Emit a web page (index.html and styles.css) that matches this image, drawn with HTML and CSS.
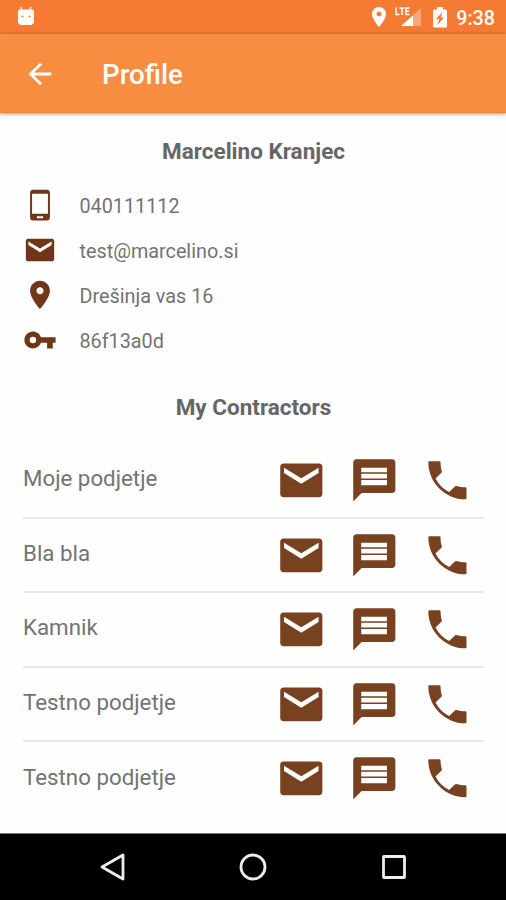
FILE: index.html
```html
<!DOCTYPE html>
<html lang="sl">
<head>
    <meta charset="UTF-8">
    <meta name="viewport" content="width=device-width, initial-scale=1.0">
    <title>Profile</title>
    <link rel="stylesheet" href="styles.css">
</head>
<body>
    <svg class="sprite" width="0" height="0">
        <symbol id="mail" viewBox="0 0 24 24"><path d="M20.500 4h-17C2.700 4 2 4.700 2 5.500v13c0 .8.7 1.500 1.500 1.500h17c.8 0 1.500-.7 1.500-1.500v-13c0-.8-.7-1.500-1.500-1.500zM20.200 8.500L12 13.600 3.800 8.500V6l8.200 5 8.200-5v2.500z"/></symbol>
        <symbol id="chat" viewBox="0 0 24 24"><path d="M20.500 2h-17C2.700 2 2 2.700 2 3.500V22l4-4h14.500c.8 0 1.500-.7 1.500-1.500v-13c0-.8-.7-1.500-1.500-1.500zM18 14.300H5.800v-2.400H18v2.400zm0-3.100H5.800V8.900H18v2.300zm0-3H5.800V6H18v2.200z"/></symbol>
        <symbol id="call" viewBox="0 0 24 24"><path d="M6.400 11.100c1.500 2.800 3.700 5 6.500 6.500l2.700-2.700q.3-.3.700-.2c1.300.4 2.800.6 4.300.6q.5 0 .5.500v4.700q0 .5-.5.500C11 21 3 13 3 3.500Q3 3 3.500 3h4.800q.5 0 .5.500c0 1.500.2 3 .6 4.200q.1.400-.2.700z"/></symbol>
        <symbol id="phone" viewBox="0 0 24 24"><path d="M17 1.300H7c-1.100 0-2 .9-2 2V21c0 1.100.9 2 2 2h10c1.100 0 2-.9 2-2V3.300c0-1.100-.9-2-2-2zM14.200 21.300H9.800V20h4.400v1.300zm3.400-3.100H6.400V4h11.200v14.200z"/></symbol>
        <symbol id="place" viewBox="0 0 24 24"><path d="M12 2C8.130 2 5 5.130 5 9c0 5.250 7 13 7 13s7-7.750 7-13c0-3.870-3.130-7-7-7zm0 9.500c-1.380 0-2.500-1.120-2.500-2.500s1.120-2.500 2.500-2.500 2.500 1.120 2.500 2.500-1.120 2.500-2.500 2.500z"/></symbol>
        <symbol id="key" viewBox="0 0 24 24"><path d="M12.650 10C11.830 7.670 9.610 6 7 6c-3.310 0-6 2.690-6 6s2.690 6 6 6c2.610 0 4.830-1.670 5.650-4H17v4h4v-4h2v-4H12.650zM7 14.300a2.300 2.300 0 1 1 0-4.600 2.300 2.300 0 0 1 0 4.600z"/></symbol>
    </svg>

    <div class="statusbar">
        <svg class="debug" width="18" height="20" viewBox="0 0 18 20"><path d="M3.500 1l1.500 3.500M14 1l-1.500 3.500" stroke="#fff" stroke-width="1.300"/><path d="M3 3.500h12q2 0 2 2V15q0 4-4 4H5q-4 0-4-4V5.500q0-2 2-2z"/><path d="M4.500 10.500h2M11.500 10.500h2" stroke="#f57a33" stroke-width="1.600"/></svg>
        <svg class="location" width="24" height="24"><use href="#place"/></svg>
        <svg class="signal" width="27" height="22" viewBox="0 0 27 22"><path d="M26 2v18H6z" opacity=".35"/><path d="M18 9.500V20H6z"/><path d="M1 1.500v7h3.500M4.500 2h5M7 2v7M14.500 2h-3.500v6.500h3.500M11 5.200h3" fill="none" stroke="#fff" stroke-width="1.500"/></svg>
        <svg class="battery" width="14" height="21" viewBox="0 0 14 21"><path d="M4 0h6v2.500h2.500q1.500 0 1.500 1.500v15q0 1.500-1.500 1.500h-11Q0 20.500 0 19V4q0-1.500 1.500-1.500H4z"/><path d="M9.500 5L3 12h3.200L4.500 18 11 10.500H7.800z" fill="#f57a33"/></svg>
        <span class="clock">9:38</span>
    </div>

    <header class="toolbar">
        <svg class="back" width="34" height="34" viewBox="0 0 24 24"><path d="M20 11H7.830l5.590-5.590L12 4l-8 8 8 8 1.410-1.410L7.830 13H20v-2z"/></svg>
        <h1>Profile</h1>
    </header>

    <main>
        <h2>Marcelino Kranjec</h2>
        <ul class="details">
            <li><svg><use href="#phone"/></svg><span>040111112</span></li>
            <li><svg><use href="#mail"/></svg><span>test@marcelino.si</span></li>
            <li><svg><use href="#place"/></svg><span>Drešinja vas 16</span></li>
            <li><svg><use href="#key"/></svg><span>86f13a0d</span></li>
        </ul>

        <h2>My Contractors</h2>
        <ul class="contractors">
            <li><span>Moje podjetje</span><svg><use href="#mail"/></svg><svg><use href="#chat"/></svg><svg><use href="#call"/></svg></li>
            <li><span>Bla bla</span><svg><use href="#mail"/></svg><svg><use href="#chat"/></svg><svg><use href="#call"/></svg></li>
            <li><span>Kamnik</span><svg><use href="#mail"/></svg><svg><use href="#chat"/></svg><svg><use href="#call"/></svg></li>
            <li><span>Testno podjetje</span><svg><use href="#mail"/></svg><svg><use href="#chat"/></svg><svg><use href="#call"/></svg></li>
            <li><span>Testno podjetje</span><svg><use href="#mail"/></svg><svg><use href="#chat"/></svg><svg><use href="#call"/></svg></li>
        </ul>
    </main>

    <nav class="navbar">
        <svg width="30" height="30" viewBox="0 0 30 30"><path d="M25 3v24L4 15z"/></svg>
        <svg width="30" height="30" viewBox="0 0 30 30"><circle cx="15" cy="15" r="12"/></svg>
        <svg width="30" height="30" viewBox="0 0 30 30"><rect x="4.500" y="4.500" width="21" height="21" rx=".5"/></svg>
    </nav>
</body>
</html>
```
FILE: styles.css
```css
* {
    box-sizing: border-box;
}
body {
    margin: 0;
    height: 900px;
    display: flex;
    flex-direction: column;
    overflow: hidden;
    font-family: Roboto, sans-serif;
    background-color: #fefefe;
    color: #737373;
}
h1, h2, ul {
    margin: 0;
    padding: 0;
}
.sprite {
    display: none;
}
.statusbar {
    height: 34px;
    display: flex;
    align-items: center;
    padding: 0 11px 0 17px;
    background-color: #f57a33;
    color: white;
    fill: white;
}
.debug {
    margin-bottom: 2px;
}
.location {
    margin-left: auto;
}
.signal {
    margin-left: 4px;
}
.battery {
    margin-left: 11px;
}
.clock {
    margin-left: 9px;
    font-size: 19.7px;
    font-weight: 500;
    line-height: 34px;
    padding-top: 3px;
}
.toolbar {
    height: 79px;
    display: flex;
    align-items: center;
    padding-left: 23px;
    background-color: #f78d40;
    border-bottom: 1px solid #f5861f;
    box-shadow: 0 1px 4px rgba(0, 0, 0, 0.4);
    fill: white;
    color: white;
}
.back {
    margin-top: 1px;
}
.toolbar h1 {
    margin-left: 45px;
    padding-top: 3px;
    font-size: 27.7px;
    font-weight: 500;
}
main {
    flex: 1;
    padding: 23px 22px 0 23px;
}
h2 {
    font-size: 22.5px;
    font-weight: 700;
    line-height: 30px;
    text-align: center;
    color: #666;
}
.details {
    margin: 16px 0 30px;
}
.details li {
    height: 45px;
    display: flex;
    align-items: center;
    font-size: 19.8px;
}
.details span {
    padding-top: 3px;
}
.details svg {
    width: 34px;
    height: 34px;
    margin-right: 22.5px;
    fill: #70361a;
}
.contractors {
    margin-top: 22px;
}
.contractors li {
    height: 74.6px;
    display: flex;
    align-items: center;
    gap: 22.6px;
    padding-right: 11px;
    border-bottom: 2px solid #e8e8e8;
    font-size: 22.3px;
}
.contractors li:last-child {
    border-color: transparent;
}
.contractors span {
    margin-right: auto;
    padding-bottom: 4px;
}
.contractors svg {
    width: 50.6px;
    height: 50.6px;
    fill: #784220;
}
.navbar {
    height: 67px;
    display: flex;
    align-items: center;
    justify-content: center;
    gap: 110.5px;
    background-color: black;
    border-top: 1px solid #777;
}
.navbar svg {
    fill: none;
    stroke: #eee;
    stroke-width: 2.8;
    stroke-linejoin: round;
}
```
